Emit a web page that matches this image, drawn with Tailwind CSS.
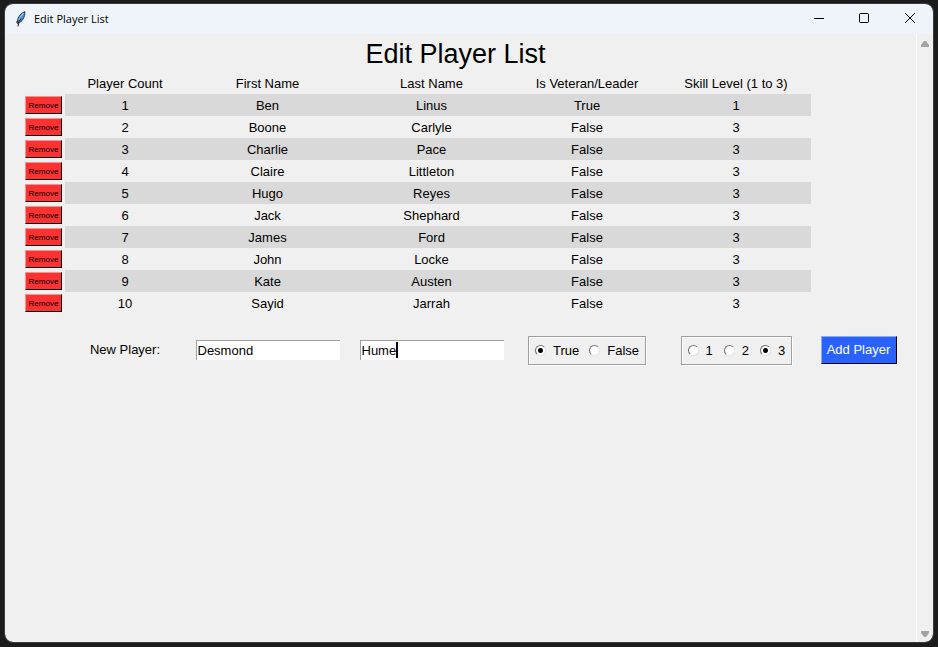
<!DOCTYPE html>
<html lang="en">
<head>
<meta charset="utf-8">
<title>Edit Player List</title>
<script src="https://cdn.jsdelivr.net/npm/@tailwindcss/browser@4"></script>
</head>
<body class="bg-[#1c1c1c] font-['Liberation_Sans',Arial,sans-serif] text-[13px] leading-4 text-black">
<div class="h-screen px-[5px] pt-1 pb-[5px]">
  <div class="flex h-full flex-col overflow-hidden rounded-lg bg-[#f0f0f0] outline outline-[#3a3d40]">
    <header class="flex h-[30px] shrink-0 items-center bg-[#eef4f9] pl-2.5">
      <svg class="h-4 w-3" viewBox="0 0 12 16" aria-hidden="true">
        <path d="M9.9 .6C7 1.6 3.6 4.8 2.8 8c-.4 1.5-.3 2.7.2 3.8 1.9-.2 3.9-1.5 4.9-3.4C9.3 6 10.2 3 9.9.6z" fill="#4a8fe0" stroke="#1a222c" stroke-width=".8"/>
        <path d="M8.4 2.4C6.4 4 4.6 6.5 4 9" fill="none" stroke="#a9d0f5" stroke-width="1.1"/>
        <path d="M6 7.4C4.8 9.2 3.6 11.6 3 15.4M2.4 9.8l-.7 1.4 1.4 1.8" fill="none" stroke="#10151c" stroke-width="1"/>
      </svg>
      <h2 class="ml-[7px] flex-1 font-['Open_Sans',sans-serif] text-[11px]">Edit Player List</h2>
      <button class="flex h-[30px] w-[46px] items-center justify-center" aria-label="Minimize">
        <svg class="size-3" viewBox="0 0 12 12" stroke="#000" fill="none"><path d="M1 5.5h10"/></svg>
      </button>
      <button class="flex h-[30px] w-[44px] items-center justify-center" aria-label="Maximize">
        <svg class="size-3" viewBox="0 0 12 12" stroke="#000" fill="none"><rect x="1.5" y="0.5" width="9" height="9" rx="1"/></svg>
      </button>
      <button class="flex h-[30px] w-[47px] items-center justify-center" aria-label="Close">
        <svg class="size-3" viewBox="0 0 12 12" stroke="#000" fill="none"><path d="M1 0l10 10M11 0L1 10"/></svg>
      </button>
    </header>

    <div class="flex min-h-0 flex-1">
      <main class="min-w-0 flex-1 pr-2.5">
        <h1 class="pt-1 pb-0.5 text-center text-[27px] leading-8">Edit Player List</h1>
        <form>
          <table class="w-full table-fixed border-separate border-spacing-0 text-center">
            <colgroup>
              <col class="w-[60px]"><col class="w-[120px]"><col class="w-[165px]"><col class="w-[163px]"><col class="w-[148px]"><col class="w-[150px]"><col>
            </colgroup>
            <thead>
              <tr class="h-[22px] *:px-0 *:pt-0.5 *:pb-0 *:font-normal">
                <td></td><th>Player Count</th><th>First Name</th><th>Last Name</th><th>Is Veteran/Leader</th><th>Skill Level (1 to 3)</th><td></td>
              </tr>
            </thead>
            <tbody id="players"></tbody>
            <tfoot>
              <tr class="h-[72px] *:px-0 *:pt-0 *:pb-0">
                <td></td>
                <td>New Player:</td>
                <td><input aria-label="First name" value="Desmond" class="block mx-auto h-5 w-36 border-t border-l border-[#a0a0a0] bg-white px-px outline-none"></td>
                <td>
                  <div class="relative mx-auto w-36">
                    <input aria-label="Last name" value="Hume" class="block h-5 w-full border-t border-l border-[#a0a0a0] bg-white px-px outline-none">
                    <span class="absolute top-0.5 left-9 h-4 w-0.5 bg-black"></span>
                  </div>
                </td>
                <td>
                  <div role="radiogroup" aria-label="Is Veteran/Leader" class="mx-auto flex h-[29px] w-[118px] items-center border border-[#a0a0a0] pl-1.5 shadow-[1px_1px_0_#fff,inset_1px_1px_0_#fff]">
                    <label class="flex items-center gap-[7px]"><input type="radio" name="vet" checked class="size-[11px] appearance-none rounded-full border border-t-[#707070] border-l-[#707070] border-r-[#e3e3e3] border-b-[#e3e3e3] bg-white checked:bg-[radial-gradient(circle,#000_2px,#fff_3px)]"><span class="pt-0.5">True</span></label>
                    <label class="ml-2.5 flex items-center gap-[7px]"><input type="radio" name="vet" class="size-[11px] appearance-none rounded-full border border-t-[#707070] border-l-[#707070] border-r-[#e3e3e3] border-b-[#e3e3e3] bg-white checked:bg-[radial-gradient(circle,#000_2px,#fff_3px)]"><span class="pt-0.5">False</span></label>
                  </div>
                </td>
                <td>
                  <div role="radiogroup" aria-label="Skill level" class="mx-auto flex h-[29px] w-[111px] items-center gap-[11px] border border-[#a0a0a0] pl-1.5 shadow-[1px_1px_0_#fff,inset_1px_1px_0_#fff]">
                    <label class="flex items-center gap-[7px]"><input type="radio" name="skill" class="size-[11px] appearance-none rounded-full border border-t-[#707070] border-l-[#707070] border-r-[#e3e3e3] border-b-[#e3e3e3] bg-white checked:bg-[radial-gradient(circle,#000_2px,#fff_3px)]"><span class="pt-0.5">1</span></label>
                    <label class="flex items-center gap-[7px]"><input type="radio" name="skill" class="size-[11px] appearance-none rounded-full border border-t-[#707070] border-l-[#707070] border-r-[#e3e3e3] border-b-[#e3e3e3] bg-white checked:bg-[radial-gradient(circle,#000_2px,#fff_3px)]"><span class="pt-0.5">2</span></label>
                    <label class="flex items-center gap-[7px]"><input type="radio" name="skill" checked class="size-[11px] appearance-none rounded-full border border-t-[#707070] border-l-[#707070] border-r-[#e3e3e3] border-b-[#e3e3e3] bg-white checked:bg-[radial-gradient(circle,#000_2px,#fff_3px)]"><span class="pt-0.5">3</span></label>
                  </div>
                </td>
                <td><button type="button" class="block mx-auto h-7 w-[76px] whitespace-nowrap border border-t-[#8ca9ff] border-l-[#8ca9ff] border-r-black border-b-black bg-[#2962ff] text-white">Add Player</button></td>
              </tr>
            </tfoot>
          </table>
        </form>
      </main>
      <div class="flex w-[17px] shrink-0 flex-col items-center justify-between border-l border-white pt-1.5 pb-1" aria-hidden="true">
        <svg class="h-2 w-2.5" viewBox="0 0 10 8"><path d="M4 1h2l3 4v2H1V5z" fill="#a3a3a3"/></svg>
        <svg class="h-2 w-2.5" viewBox="0 0 10 8"><path d="M4 7h2l3-4V1H1v2z" fill="#a3a3a3"/></svg>
      </div>
    </div>
  </div>
</div>
<script>
const players = [
  ["Ben", "Linus", "True", 1],
  ["Boone", "Carlyle", "False", 3],
  ["Charlie", "Pace", "False", 3],
  ["Claire", "Littleton", "False", 3],
  ["Hugo", "Reyes", "False", 3],
  ["Jack", "Shephard", "False", 3],
  ["James", "Ford", "False", 3],
  ["John", "Locke", "False", 3],
  ["Kate", "Austen", "False", 3],
  ["Sayid", "Jarrah", "False", 3]
];
document.getElementById("players").innerHTML = players.map((p, i) => {
  const shade = i % 2 ? "" : "bg-[#d9d9d9]";
  const cells = [i + 1, ...p].map(v => `<td class="px-0 pt-0.5 pb-0 ${shade}">${v}</td>`).join("");
  return `<tr class="h-[22px]"><td class="p-0"><button type="button" aria-label="Remove ${p[0]} ${p[1]}" class="ml-5 block h-[18px] w-[37px] border border-t-[#ff9090] border-l-[#ff9090] border-r-black border-b-black bg-[#fa3232] pt-0.5 text-[8px] leading-3">Remove</button></td>${cells}<td></td></tr>`;
}).join("");
</script>
</body>
</html>
